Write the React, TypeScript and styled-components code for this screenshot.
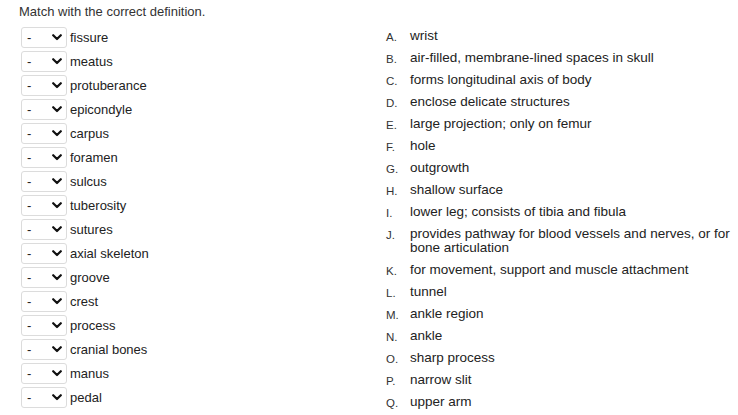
import React from "react";
import styled, { createGlobalStyle } from "styled-components";

const Global = createGlobalStyle`
  html, body { margin: 0; padding: 0; background: #fff; }
  body { font-family: Arial, "Liberation Sans", sans-serif; color: #333; }
`;

const Page = styled.div`
  padding: 4px 0 0 19px;
`;

const Title = styled.div`
  font-size: 13px;
  line-height: 16px;
  color: #333;
`;

const Columns = styled.div`
  display: grid;
  grid-template-columns: 367px 1fr;
  margin-top: 5px;
`;

const LeftList = styled.div`
  display: flex;
  flex-direction: column;
  padding-left: 2px;
`;

const Row = styled.div`
  display: flex;
  align-items: center;
  height: 24px;
  gap: 3px;
  font-size: 13px;
  color: #222;
`;

const Select = styled.div`
  box-sizing: border-box;
  width: 46px;
  height: 21px;
  border: 1px solid #dcdcdc;
  border-radius: 3px;
  background: #fff;
  display: flex;
  align-items: center;
  justify-content: space-between;
  padding: 0 4px 0 5px;
  font-size: 13px;
  color: #222;
`;

const RightList = styled.div`
  display: flex;
  flex-direction: column;
`;

const DefRow = styled.div`
  display: flex;
  align-items: baseline;
  padding: 4px 0;
  font-size: 13.5px;
  line-height: 14px;
  color: #222;
`;

const Letter = styled.span`
  width: 24px;
  flex: none;
  font-size: 11.5px;
  line-height: 14px;
  color: #333;
  position: relative;
  top: 1px;
`;

const DefText = styled.span`
  max-width: 330px;
`;

const Chevron = () => (
  <svg width="10" height="7" viewBox="0 0 10 7">
    <path d="M1.2 1.2 L5 5 L8.8 1.2" fill="none" stroke="#111" strokeWidth="2.2" strokeLinecap="round" strokeLinejoin="round" />
  </svg>
);

const terms = [
  "fissure", "meatus", "protuberance", "epicondyle", "carpus", "foramen", "sulcus",
  "tuberosity", "sutures", "axial skeleton", "groove", "crest", "process",
  "cranial bones", "manus", "pedal",
];

const defs = [
  "wrist",
  "air-filled, membrane-lined spaces in skull",
  "forms longitudinal axis of body",
  "enclose delicate structures",
  "large projection; only on femur",
  "hole",
  "outgrowth",
  "shallow surface",
  "lower leg; consists of tibia and fibula",
  "provides pathway for blood vessels and nerves, or for bone articulation",
  "for movement, support and muscle attachment",
  "tunnel",
  "ankle region",
  "ankle",
  "sharp process",
  "narrow slit",
  "upper arm",
];

export default function App() {
  return (
    <Page>
      <Global />
      <Title>Match with the correct definition.</Title>
      <Columns>
        <LeftList>
          {terms.map((t) => (
            <Row key={t}>
              <Select>
                <span>-</span>
                <Chevron />
              </Select>
              <span>{t}</span>
            </Row>
          ))}
        </LeftList>
        <RightList>
          {defs.map((d, i) => (
            <DefRow key={d}>
              <Letter>{String.fromCharCode(65 + i)}.</Letter>
              <DefText>{d}</DefText>
            </DefRow>
          ))}
        </RightList>
      </Columns>
    </Page>
  );
}
